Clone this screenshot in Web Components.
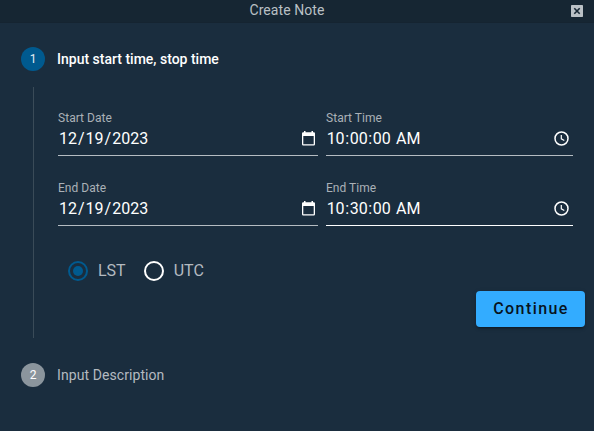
<!DOCTYPE html>
<html lang="en">
<head>
<meta charset="utf-8">
<title>Create Note</title>
<style>
html,body{margin:0;height:100%}
body{font-family:Roboto,"Liberation Sans",sans-serif;background:#1a2d3e;color:#fff;overflow:hidden}
</style>
</head>
<body>
<note-dialog heading="Create Note">
  <note-step number="1" label="Input start time, stop time" active>
    <date-field label="Start Date" value="12/19/2023" kind="date"></date-field>
    <date-field label="Start Time" value="10:00:00 AM" kind="time"></date-field>
    <date-field label="End Date" value="12/19/2023" kind="date"></date-field>
    <date-field label="End Time" value="10:30:00 AM" kind="time" focused></date-field>
    <zone-radio slot="options" checked>LST</zone-radio>
    <zone-radio slot="options">UTC</zone-radio>
    <action-button slot="actions">Continue</action-button>
  </note-step>
  <note-step number="2" label="Input Description"></note-step>
</note-dialog>
<script>
class NoteDialog extends HTMLElement{
  connectedCallback(){
    this.attachShadow({mode:'open'}).innerHTML=`<style>
    :host{display:flex;flex-direction:column;height:431px;width:594px}
    header{display:grid;grid-template-columns:1fr auto 1fr;height:23px;background:#162633;box-sizing:border-box;border-bottom:1px solid #152431;color:#bac0c5;font-size:14px;line-height:20px;letter-spacing:.08px}
    h1{grid-column:2;font:inherit;margin:0 20px 0 0}
    button{all:unset;justify-self:end;margin:5px 11px 0 0;width:12px;height:12px}
    svg{display:block}
    main{padding:24px 9px 0 21px}
    </style><header><h1>${this.getAttribute('heading')}</h1><button aria-label="Close"><svg width="12" height="12" viewBox="0 0 12 12"><rect width="12" height="12" rx=".7" fill="#bac1c6"/><path d="M3.3 3.3l5.4 5.4M8.7 3.3L3.3 8.7" stroke="#162633" stroke-width="1.6"/></svg></button></header><main><slot></slot></main>`;
  }
}
class NoteStep extends HTMLElement{
  connectedCallback(){
    const active=this.hasAttribute('active');
    this.attachShadow({mode:'open'}).innerHTML=`<style>
    :host{display:block}
    .head{display:flex;align-items:center;gap:12px;height:24px;font-size:14px;letter-spacing:.08px;color:#b4bac0}
    .num{width:24px;height:24px;border-radius:50%;background:#8b959d;color:#fff;display:grid;place-items:center;font-size:12px;letter-spacing:0}
    :host([active]) .head{color:#fff;font-weight:500;letter-spacing:0}
    :host([active]) .num{background:#005a8f;font-weight:400;color:#e4edf3}
    .body{margin:16px 0 25px 12px;border-left:1px solid #3a4b58;height:251px;box-sizing:border-box;padding:23px 0 0 24px;display:flex;flex-direction:column}
    .fields{display:grid;grid-template-columns:260px 247px;column-gap:8px;row-gap:24px}
    .options{display:flex;gap:18px;padding:35px 0 0 10px}
    .actions{display:flex;justify-content:flex-end;margin-top:10px}
    </style><div class="head"><span class="num">${this.getAttribute('number')}</span><span>${this.getAttribute('label')}</span></div>${active?'<div class="body"><div class="fields"><slot></slot></div><div class="options"><slot name="options"></slot></div><div class="actions"><slot name="actions"></slot></div></div>':''}`;
  }
}
class DateField extends HTMLElement{
  connectedCallback(){
    const icon=this.getAttribute('kind')==='date'
      ?'<svg viewBox="0 0 13 15"><path fill-rule="evenodd" d="M2 0h1.500v1.300h6V0H11v1.300h.8Q13 1.300 13 2.500v10.800q0 1.200-1.200 1.200H1.200Q0 14.500 0 13.300V2.500Q0 1.300 1.200 1.300H2zM1.300 5v8.200h10.400V5z"/></svg>'
      :'<svg viewBox="0 0 15 15"><circle cx="7.500" cy="7.500" r="6.500" fill="none" stroke="#fff" stroke-width="1.500"/><path d="M7.300 4v3.800l3 1.800" fill="none" stroke="#fff" stroke-width="1.200"/></svg>';
    const value=this.getAttribute('value').replace(/\d+|AM|PM/g,m=>`<i>${m}</i>`);
    this.attachShadow({mode:'open'}).innerHTML=`<style>
    :host{display:flex;flex-direction:column;height:46px;box-sizing:border-box;border-bottom:1px solid #b5bcc2}
    :host([focused]){border-color:#fff}
    label{font-size:12px;line-height:16px;letter-spacing:.04px;color:#aab1b7}
    .row{display:flex;align-items:center;justify-content:space-between;height:25px}
    .value{font-size:16px;line-height:24px;white-space:pre}
    i{font-style:normal;padding:0 1px}
    :host([kind=time]) i{padding:0 .64px}
    svg{fill:#fff;width:13px;height:15px;margin-right:3px}
    :host([kind=time]) svg{width:15px;height:15px;margin-right:4px}
    </style><label>${this.getAttribute('label')}</label><div class="row"><span class="value">${value}</span>${icon}</div>`;
  }
}
class ZoneRadio extends HTMLElement{
  connectedCallback(){
    this.attachShadow({mode:'open'}).innerHTML=`<style>
    :host{display:flex;align-items:center;gap:10px;height:20px;font-size:16px;line-height:20px;color:#b4bac0}
    .ring{width:20px;height:20px;box-sizing:border-box;border:2px solid #fff;border-radius:50%;display:grid;place-items:center}
    :host([checked]) .ring{border-color:#005a8f}
    :host([checked]) .ring::after{content:"";width:10px;height:10px;border-radius:50%;background:#005a8f}
    </style><span class="ring"></span><span><slot></slot></span>`;
  }
}
class ActionButton extends HTMLElement{
  connectedCallback(){
    this.attachShadow({mode:'open'}).innerHTML=`<style>
    :host{display:block}
    button{all:unset;display:block;box-sizing:border-box;width:109px;height:36px;padding-left:1px;text-align:center;border-radius:4px;background:#33acff;color:#07131d;font-size:16px;font-weight:500;letter-spacing:1.43px;line-height:36px;box-shadow:0 3px 1px -2px #0003,0 2px 2px #0002,0 1px 5px #0002}
    </style><button><slot></slot></button>`;
  }
}
customElements.define('note-dialog',NoteDialog);
customElements.define('note-step',NoteStep);
customElements.define('date-field',DateField);
customElements.define('zone-radio',ZoneRadio);
customElements.define('action-button',ActionButton);
</script>
</body>
</html>
